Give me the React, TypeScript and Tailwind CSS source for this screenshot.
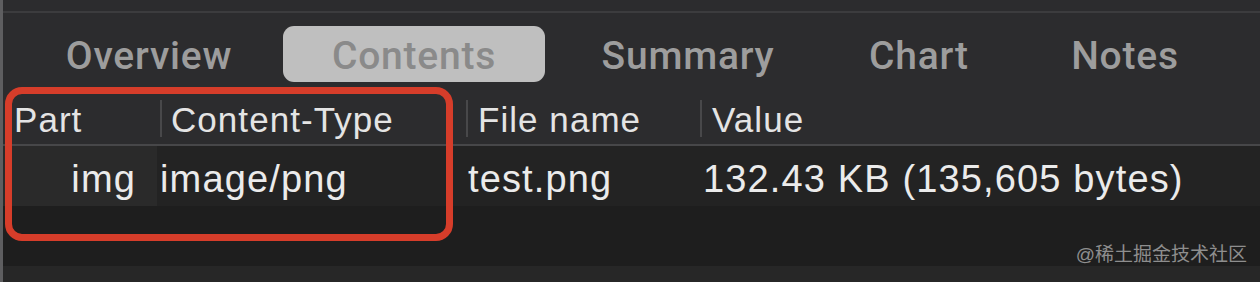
import React from "react";

const tabs = [
  { label: "Overview", w: "w-[218px]", active: false },
  { label: "Contents", w: "w-[262px]", active: true },
  { label: "Summary", w: "w-[236px]", active: false },
  { label: "Chart", w: "w-[176px]", active: false },
  { label: "Notes", w: "w-[186px]", active: false },
];

export default function App() {
  return (
    <div
      className="relative w-[1260px] h-[282px] overflow-hidden bg-[#2c2c2e] border-l-[3px] border-[#5e5e60]"
      style={{ fontFamily: '"Liberation Sans", Arial, "Noto Sans CJK SC", sans-serif' }}
    >
      <div className="h-[13px] border-b-2 border-[#3c3c3e]" />

      {/* tabs */}
      <div className="h-[80px] flex items-start pt-[13px] pl-[37px] gap-[25px] font-['Roboto'] font-medium">
        {tabs.map((t) =>
          t.active ? (
            <div
              key={t.label}
              className={`${t.w} h-[56px] rounded-[11px] bg-[#bfbfbf] flex items-center justify-center pt-[5px] text-[39px] text-[#8a8a8a] tracking-[0.02em]`}
            >
              {t.label}
            </div>
          ) : (
            <div
              key={t.label}
              className={`${t.w} h-[56px] flex items-center justify-center pt-[5px] text-[39px] text-[#9d9d9d] tracking-[0.02em]`}
            >
              {t.label}
            </div>
          )
        )}
      </div>

      {/* header row */}
      <div className="h-[53px] flex items-center border-b-2 border-[#474749] text-[35px] text-[#e4e4e4] tracking-[0.03em]">
        <div className="w-[157px] pl-[11px] pt-[3px]">Part</div>
        <div className="w-[306px] flex items-center">
          <div className="w-[2px] h-[37px] bg-[#48484a]" />
          <span className="ml-[9px] pt-[3px]">Content-Type</span>
        </div>
        <div className="w-[234px] flex items-center">
          <div className="w-[2px] h-[37px] bg-[#48484a]" />
          <span className="ml-[10px] pt-[3px]">File name</span>
        </div>
        <div className="flex-1 flex items-center">
          <div className="w-[2px] h-[37px] bg-[#48484a]" />
          <span className="ml-[10px] pt-[3px]">Value</span>
        </div>
      </div>

      {/* data row */}
      <div className="h-[60px] flex items-center bg-[#232323] text-[38px] text-[#ebebeb] tracking-[0.03em]">
        <div className="w-[154px] h-full bg-[#2a2a2a] flex items-center justify-end pr-[21px] pt-[6px]">img</div>
        <div className="w-[309px] pl-[3px] pt-[6px]">image/png</div>
        <div className="w-[235px] pl-[2px] pt-[6px]">test.png</div>
        <div className="flex-1 pl-[2px] pt-[6px]">132.43 KB (135,605 bytes)</div>
      </div>

      <div className="h-[60px] bg-[#1e1e1e] flex items-end justify-end pr-[13px]">
        <span className="text-[19px] leading-[22px] text-[#8e8e8e]">@稀土掘金技术社区</span>
      </div>
      <div className="h-[18px] bg-[#272727]" />

      {/* red annotation */}
      <div className="absolute left-[2px] top-[87px] w-[448px] h-[154px] rounded-[17px] border-[7px] border-[#d63d2a]" />
    </div>
  );
}
